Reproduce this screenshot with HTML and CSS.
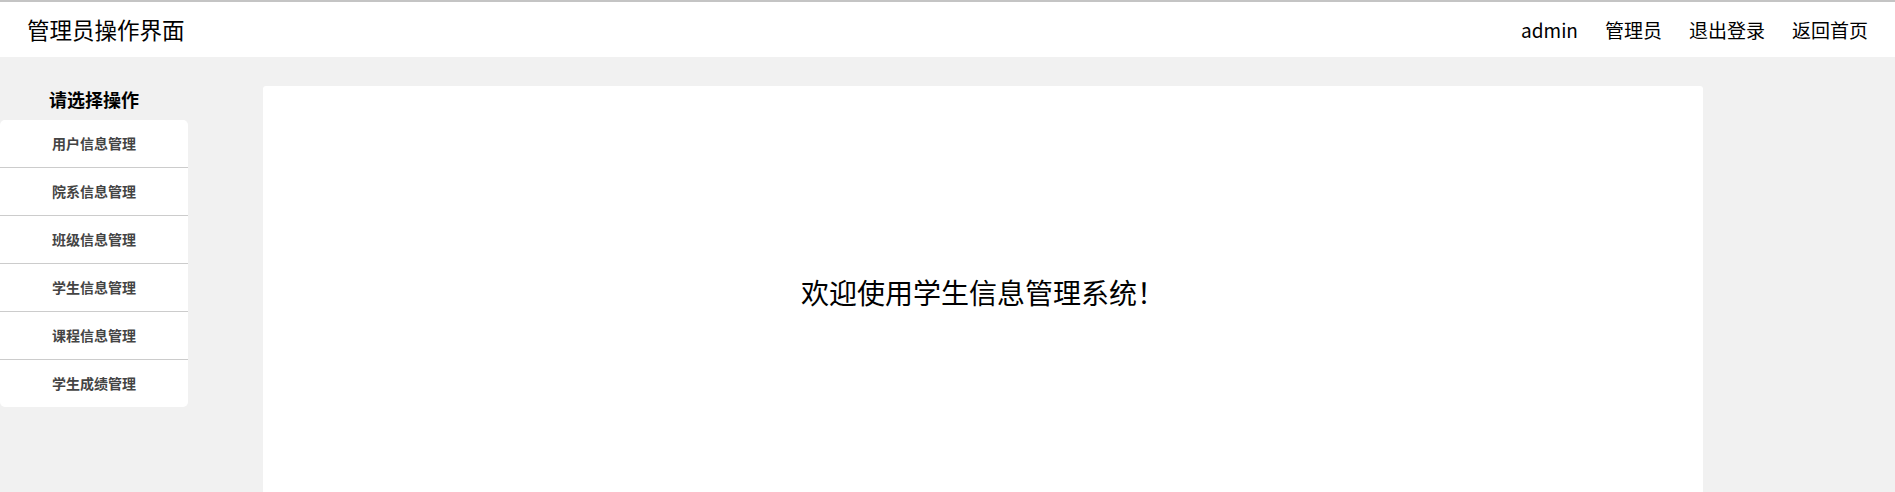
FILE: index.html
```html
<!DOCTYPE html>
<html lang="zh-CN">
<head>
<meta charset="utf-8">
<title>管理员操作界面</title>
<link rel="stylesheet" href="styles.css">
</head>
<body>
<header class="topbar">
  <div class="brand">管理员操作界面</div>
  <nav class="topnav">
    <a class="nav-item" href="#">admin</a>
    <a class="nav-item" href="#">管理员</a>
    <a class="nav-item" href="#">退出登录</a>
    <a class="nav-item" href="#">返回首页</a>
  </nav>
</header>
<div class="layout">
  <aside class="sidebar">
    <div class="side-title">请选择操作</div>
    <ul class="menu">
      <li class="menu-item">用户信息管理</li>
      <li class="menu-item">院系信息管理</li>
      <li class="menu-item">班级信息管理</li>
      <li class="menu-item">学生信息管理</li>
      <li class="menu-item">课程信息管理</li>
      <li class="menu-item">学生成绩管理</li>
    </ul>
  </aside>
  <main class="content">
    <div class="welcome">欢迎使用学生信息管理系统！</div>
  </main>
</div>
</body>
</html>
```
FILE: styles.css
```css
* { box-sizing: border-box; }
html, body { margin: 0; padding: 0; }
body {
  background: #f1f1f1;
  font-family: "Noto Sans CJK SC", "Noto Sans", sans-serif;
  color: #000;
  height: 492px;
  overflow: hidden;
}
.topbar {
  height: 57px;
  background: #fff;
  border-top: 2px solid #c4c4c4;
  display: flex;
  align-items: center;
  justify-content: space-between;
  padding: 0 27px 0 27px;
}
.brand {
  font-size: 22.5px;
  line-height: 1;
}
.topnav {
  display: flex;
  gap: 27px;
}
.nav-item {
  font-size: 19px;
  line-height: 1;
  color: #000;
  text-decoration: none;
}
.layout {
  display: flex;
  align-items: flex-start;
}
.sidebar {
  width: 188px;
  flex: none;
}
.side-title {
  height: 63px;
  padding-top: 28px;
  text-align: center;
  font-size: 18px;
  font-weight: bold;
  line-height: 28px;
}
.menu {
  list-style: none;
  margin: 0;
  padding: 0;
  background: #fff;
  border-radius: 5px;
}
.menu-item {
  height: 48px;
  border-top: 1px solid #cccccc;
  text-align: center;
  font-size: 14px;
  font-weight: bold;
  color: #444;
  line-height: 47px;
}
.menu-item:first-child {
  border-top: none;
  height: 47px;
}
.content {
  margin-left: 75px;
  margin-top: 29px;
  width: 1440px;
  height: 420px;
  background: #fff;
  border-radius: 3px 3px 0 0;
  display: flex;
  justify-content: center;
  padding-top: 188px;
}
.welcome {
  font-size: 28px;
  line-height: 36px;
}
```
